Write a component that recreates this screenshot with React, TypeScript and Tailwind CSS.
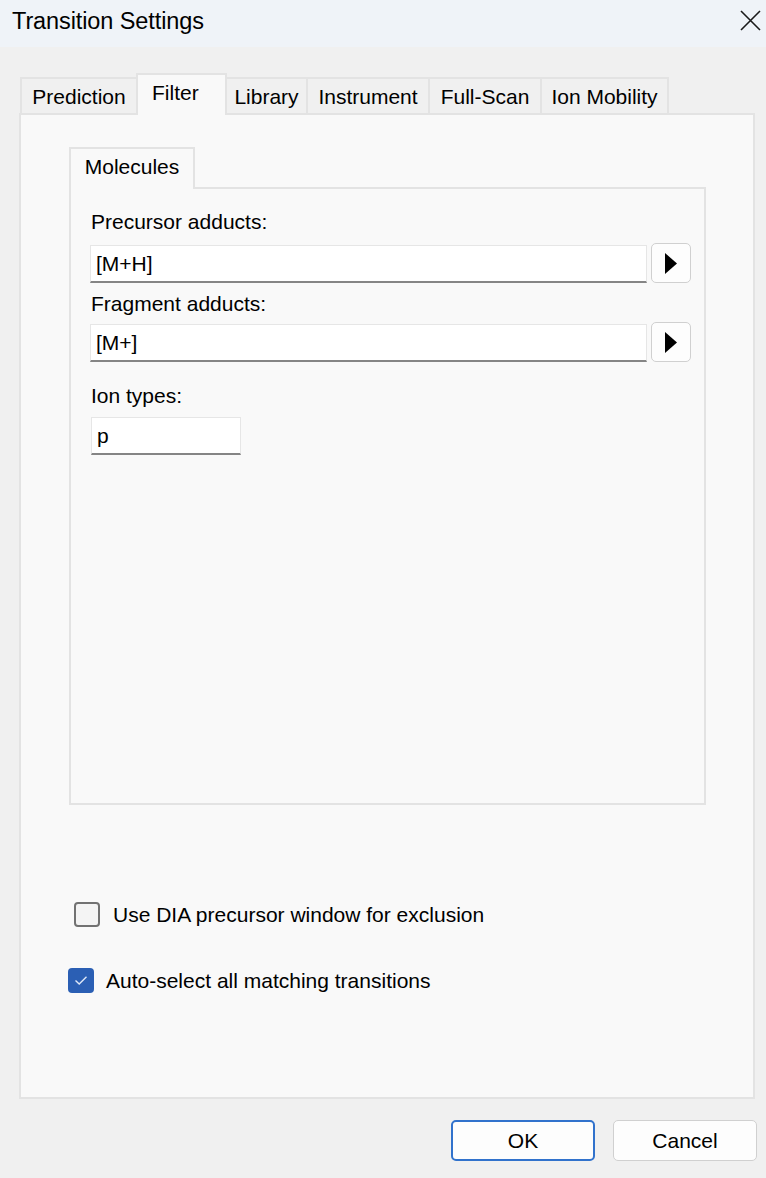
function Arrow() {
  return (
    <button className="flex h-[40px] w-[40px] shrink-0 items-center justify-center rounded-[5px] border border-[#d0d0d0] bg-[#fdfdfd]">
      <svg width="12" height="21" viewBox="0 0 12 21">
        <path d="M0 0 L12 10.5 L0 21 Z" fill="#000" />
      </svg>
    </button>
  )
}

function Field({ value, className }: { value: string; className: string }) {
  return (
    <div
      className={`flex h-[38px] items-center border border-b-2 border-[#e6e6e6] border-b-[#858585] bg-white pl-[5px] ${className}`}
    >
      {value}
    </div>
  )
}

const tabs = [
  { label: 'Prediction', w: 'w-[118px] border-l-2' },
  { label: 'Filter', w: 'w-[91px]', active: true },
  { label: 'Library', w: 'w-[81px]' },
  { label: 'Instrument', w: 'w-[122px]' },
  { label: 'Full-Scan', w: 'w-[112px]' },
  { label: 'Ion Mobility', w: 'w-[127px]' },
]

export default function App() {
  return (
    <div
      className="flex h-[1178px] w-[766px] flex-col bg-[#f0f0f0] text-[21px] leading-[24px] text-black"
      style={{ fontFamily: '"Liberation Sans", Arial, sans-serif' }}
    >
      <div className="flex h-[47px] shrink-0 items-center justify-between bg-[#eff3f8] pl-[12px] pr-[5px]">
        <span className="mb-[6px] text-[23.5px] tracking-[-0.1px]">Transition Settings</span>
        <svg width="21" height="21" viewBox="0 0 21 21" className="mb-[6px]">
          <path d="M1 1 L20 20 M20 1 L1 20" stroke="#1a1a1a" strokeWidth="1.6" />
        </svg>
      </div>

      <div className="ml-[19px] mt-[26px] flex flex-col">
        <div className="ml-[1px] flex items-end">
          {tabs.map((t) =>
            t.active ? (
              <div
                key={t.label}
                className={`relative z-10 -mb-[2px] -ml-[2px] flex h-[42px] border-2 border-b-0 border-[#e3e3e3] bg-[#f9f9f9] pl-[14px] pt-[6px] ${t.w}`}
              >
                {t.label}
              </div>
            ) : (
              <div
                key={t.label}
                className={`flex h-[36px] items-center justify-center border-t-2 border-r-2 border-[#e3e3e3] bg-[#f0f0f0] pt-[2px] ${t.w}`}
              >
                {t.label}
              </div>
            )
          )}
        </div>

        <div className="flex h-[986px] w-[736px] flex-col border-2 border-[#e3e3e3] bg-[#f9f9f9] pl-[48px] pt-[32px]">
          <div className="flex">
            <div className="relative z-10 -mb-[2px] flex h-[42px] w-[126px] items-start justify-center border-2 border-b-0 border-[#e3e3e3] bg-[#f9f9f9] pt-[6px]">
              Molecules
            </div>
          </div>
          <div className="flex h-[618px] w-[637px] flex-col border-2 border-[#e3e3e3] bg-[#f9f9f9] pl-[19px] pr-[13px] pt-[21px]">
            <div className="pl-[1px]">Precursor adducts:</div>
            <div className="mt-[9px] flex items-end gap-[4px]">
              <Field value="[M+H]" className="flex-1" />
              <Arrow />
            </div>
            <div className="mt-[9px] pl-[1px]">Fragment adducts:</div>
            <div className="mt-[6px] flex items-start gap-[4px]">
              <Field value="[M+]" className="mt-[2px] flex-1" />
              <Arrow />
            </div>
            <div className="mt-[22px] pl-[1px]">Ion types:</div>
            <Field value="p" className="mt-[9px] ml-[1px] w-[150px]" />
          </div>

          <label className="ml-[5px] mt-[97px] flex items-center gap-[13px]">
            <span className="h-[25px] w-[26px] rounded-[4px] border-2 border-[#727272] bg-[#f4f4f4]" />
            <span>Use DIA precursor window for exclusion</span>
          </label>
          <label className="-ml-[1px] mt-[41px] flex items-center gap-[12px]">
            <span className="flex h-[25px] w-[26px] items-center justify-center rounded-[4px] bg-[#2b5fb4]">
              <svg width="14" height="11" viewBox="0 0 14 11">
                <path d="M1.5 5.5 L5.2 9 L12.5 1.8" stroke="#dfe8f7" strokeWidth="1.4" fill="none" />
              </svg>
            </span>
            <span>Auto-select all matching transitions</span>
          </label>
        </div>
      </div>

      <div className="mt-[21px] flex justify-end gap-[18px] pr-[9px]">
        <button className="flex h-[41px] w-[144px] items-center justify-center rounded-[5px] border-2 border-[#3172cc] bg-[#fdfdfd]">
          OK
        </button>
        <button className="flex h-[41px] w-[144px] items-center justify-center rounded-[5px] border border-[#d0d0d0] bg-[#fdfdfd]">
          Cancel
        </button>
      </div>
    </div>
  )
}
